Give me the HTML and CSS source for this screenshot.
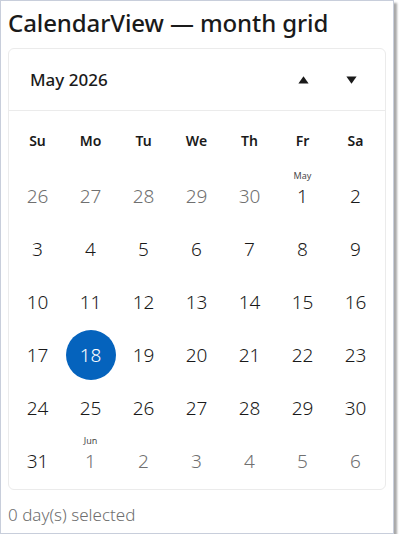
FILE: index.html
```html
<!DOCTYPE html>
<html lang="en">
<head>
    <meta charset="UTF-8">
    <meta name="viewport" content="width=device-width, initial-scale=1.0">
    <title>CalendarView</title>
    <link rel="stylesheet" href="styles.css">
</head>
<body>
    <div class="window">
        <h1 class="title">CalendarView — month grid</h1>

        <div class="calendar">
            <div class="calendar-header">
                <span class="calendar-month">May 2026</span>
                <div class="calendar-nav">
                    <button class="nav-button" aria-label="Previous">
                        <svg width="11" height="8" viewBox="0 0 11 8"><path d="M5.5 0.3 L10.6 7.6 L0.4 7.6 Z" fill="#1a1a1a"/></svg>
                    </button>
                    <button class="nav-button" aria-label="Next">
                        <svg width="11" height="8" viewBox="0 0 11 8"><path d="M0.4 0.4 L10.6 0.4 L5.5 7.7 Z" fill="#1a1a1a"/></svg>
                    </button>
                </div>
            </div>

            <div class="calendar-grid">
                <div class="weekday">Su</div>
                <div class="weekday">Mo</div>
                <div class="weekday">Tu</div>
                <div class="weekday">We</div>
                <div class="weekday">Th</div>
                <div class="weekday">Fr</div>
                <div class="weekday">Sa</div>

                <div class="day other">26</div>
                <div class="day other">27</div>
                <div class="day other">28</div>
                <div class="day other">29</div>
                <div class="day other">30</div>
                <div class="day"><span class="day-label">May</span><span class="day-number">1</span></div>
                <div class="day">2</div>

                <div class="day">3</div>
                <div class="day">4</div>
                <div class="day">5</div>
                <div class="day">6</div>
                <div class="day">7</div>
                <div class="day">8</div>
                <div class="day">9</div>

                <div class="day">10</div>
                <div class="day">11</div>
                <div class="day">12</div>
                <div class="day">13</div>
                <div class="day">14</div>
                <div class="day">15</div>
                <div class="day">16</div>

                <div class="day">17</div>
                <div class="day today"><span class="day-circle">18</span></div>
                <div class="day">19</div>
                <div class="day">20</div>
                <div class="day">21</div>
                <div class="day">22</div>
                <div class="day">23</div>

                <div class="day">24</div>
                <div class="day">25</div>
                <div class="day">26</div>
                <div class="day">27</div>
                <div class="day">28</div>
                <div class="day">29</div>
                <div class="day">30</div>

                <div class="day">31</div>
                <div class="day other"><span class="day-label">Jun</span><span class="day-number">1</span></div>
                <div class="day other">2</div>
                <div class="day other">3</div>
                <div class="day other">4</div>
                <div class="day other">5</div>
                <div class="day other">6</div>
            </div>
        </div>

        <p class="status">0 day(s) selected</p>
    </div>
</body>
</html>
```

FILE: styles.css
```css
* {
    box-sizing: border-box;
    margin: 0;
    padding: 0;
}

body {
    background: #ffffff;
    font-family: "Noto Sans", "Open Sans", sans-serif;
    color: #1a1a1a;
}

/* janela */
.window {
    width: 394px;
    height: 534px;
    border: 1px solid #c8cedb;
    box-shadow: 3px 3px 2px #a9a9a9;
    background: #ffffff;
    padding: 0 7px;
}

.title {
    font-size: 24px;
    font-weight: 500;
    line-height: 32px;
    padding-top: 6px;
    letter-spacing: -0.1px;
}

/* calendario */
.calendar {
    margin-top: 9px;
    width: 378px;
    border: 1px solid #ebebeb;
    border-radius: 6px;
}

.calendar-header {
    height: 62px;
    display: flex;
    align-items: center;
    justify-content: space-between;
    padding: 0 10px 0 21px;
    border-bottom: 1px solid #ebebeb;
}

.calendar-month {
    font-size: 17px;
    font-weight: 500;
}

.calendar-nav {
    display: flex;
}

.nav-button {
    width: 48px;
    height: 40px;
    border: none;
    background: none;
    display: flex;
    justify-content: center;
    align-items: center;
}

.calendar-grid {
    display: grid;
    grid-template-columns: repeat(7, 53px);
    grid-template-rows: 58px repeat(6, 53px);
    padding: 0 2px 2px 2px;
}

.weekday {
    display: flex;
    justify-content: center;
    align-items: center;
    font-size: 14px;
    font-weight: 600;
}

.day {
    position: relative;
    display: flex;
    justify-content: center;
    align-items: center;
    font-size: 19px;
    font-weight: 300;
    line-height: 20px;
}

.day.other {
    color: #707070;
}

.day-number {
    display: block;
    margin-top: 1px;
}

.day-label {
    position: absolute;
    top: 1px;
    left: 0;
    right: 0;
    text-align: center;
    font-size: 9px;
    line-height: 12px;
    font-weight: 400;
    color: #4a4a4a;
}

.day-circle {
    width: 50px;
    height: 50px;
    border-radius: 50%;
    background: #0563bd;
    color: #ffffff;
    display: flex;
    justify-content: center;
    align-items: center;
}

.status {
    margin-top: 13px;
    font-size: 17px;
    color: #6f6f6f;
    font-weight: 300;
}
```
